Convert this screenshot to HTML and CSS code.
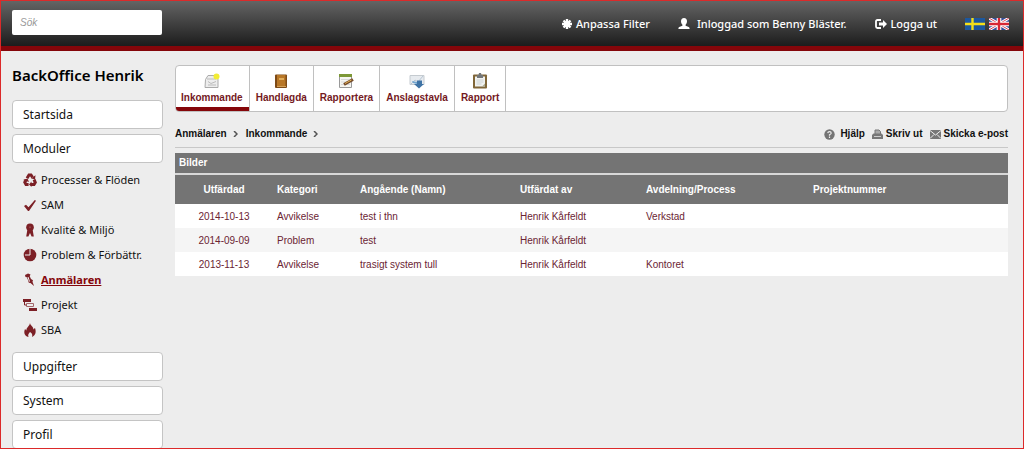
FILE: index.html
```html
<!DOCTYPE html>
<html lang="sv">
<head>
<meta charset="utf-8">
<title>BackOffice Henrik</title>
<link rel="stylesheet" href="styles.css">
</head>
<body>
<header class="topbar">
  <input class="search" type="search" placeholder="Sök" aria-label="Sök">
  <nav class="usernav">
    <a href="#"><svg width="10" height="10" viewBox="0 0 10 10" stroke="#fff" stroke-width="2.4"><path d="M5 0v10M0 5h10M1.5 1.5l7 7M8.5 1.5l-7 7"/></svg>Anpassa Filter</a>
    <a class="user" href="#"><svg width="12" height="12" viewBox="0 0 12 12" fill="#fff"><path d="M6 0c2 0 3 1.300 3 3.200 0 1.600-.6 2.700-1.400 3.500v1.100c1.500.6 4 1 4 2.600V11H.4v-.6c0-1.600 2.500-2 4-2.600V6.700C3.600 5.900 3 4.800 3 3.200 3 1.300 4 0 6 0z"/></svg>Inloggad som Benny Bläster.</a>
    <a class="logout" href="#"><svg width="12" height="10" viewBox="0 0 12 10"><path d="M6 1H2.500Q1 1 1 2.500v5Q1 9 2.500 9H6" fill="none" stroke="#fff" stroke-width="1.800"/><path d="M4 3.500h4V1l4 4-4 4V6.500H4z" fill="#fff"/></svg>Logga ut</a>
    <span class="flags">
      <a href="#" aria-label="Svenska"><svg width="20" height="12" viewBox="0 0 20 12"><path fill="#1c579e" d="M0 0h20v12H0z"/><path stroke="#f5df18" stroke-width="2.400" d="M7.500 0v12M0 6h20"/></svg></a>
      <a href="#" aria-label="English"><svg width="20" height="12" viewBox="0 0 20 12"><path fill="#344d9a" d="M0 0h20v12H0z"/><path stroke="#fff" stroke-width="2.800" d="M0 0l20 12M20 0L0 12"/><path stroke="#d64456" d="M0 0l20 12M20 0L0 12"/><path stroke="#fff" stroke-width="4.600" d="M10 0v12M0 6h20"/><path stroke="#d82635" stroke-width="2.400" d="M10 0v12M0 6h20"/></svg></a>
    </span>
  </nav>
</header>
<div class="page">
  <aside class="sidebar">
    <h1>BackOffice Henrik</h1>
    <nav class="menu">
      <a class="box" href="#">Startsida</a>
      <a class="box" href="#">Moduler</a>
      <ul class="modules">
        <li><a href="#"><svg viewBox="0 0 14 14"><g fill="none" stroke="#7c2026" stroke-width="3"><path d="M4 5.200L6 2h2l1.600 2.300"/><path d="M11 6.500l1.300 2.800-1.300 2.200H8"/><path d="M5.600 11.500H3L1.800 9.300l1.400-2.500"/></g><path fill="#7c2026" d="M8 5.500l4 .8.500-4zM8.500 8.500v5.500L6 11.500zM0 7l4.500-1.500L6 9z"/></svg>Processer &amp; Flöden</a></li>
        <li><a href="#"><svg viewBox="0 0 14 14"><path fill="#7c2026" d="M1 8l2-1.300 2.500 2.600L11.800 2l1.200.7L6 13H5z"/></svg>SAM</a></li>
        <li><a href="#"><svg viewBox="0 0 14 14"><circle cx="7" cy="4.200" r="3.800" fill="#7c2026"/><path fill="#7c2026" d="M4.500 6h5l1.300 7.500H8.600L7 10l-1.600 3.500H3.200z"/><circle cx="7" cy="4.200" r="1" fill="#96454a"/></svg>Kvalité &amp; Miljö</a></li>
        <li><a href="#"><svg viewBox="0 0 14 14"><circle cx="7" cy="7" r="6.300" fill="#7c2026"/><path d="M7 0v7H2" fill="none" stroke="#eee"/></svg>Problem &amp; Förbättr.</a></li>
        <li><a class="current" href="#"><svg viewBox="0 0 14 14"><path fill="#7c2026" d="M2 2l3-1.500 2.500 1-.8 1.800L8 6l2 1.200-.5 1.600L11 13l-3.500-3-1.700-.3L5 7 3.800 4.300 2.500 4z"/><path stroke="#eee" d="M5 4l1.500 4.500"/></svg>Anmälaren</a></li>
        <li><a href="#"><svg viewBox="0 0 14 14"><path fill="#7c2026" d="M0 1h8v3H0zM6 10h8v3H6z"/><path fill="none" stroke="#a4686c" d="M3.500 5.500h7v3h-7z"/><path fill="none" stroke="#7c2026" d="M1.500 4v3h2"/></svg>Projekt</a></li>
        <li><a href="#"><svg viewBox="0 0 14 14"><path fill="#7c2026" d="M7 0c.2 3 4 3.600 3.200 6.500L12 5c1.500 4 .5 7.500-3 9 .8-2.300 0-3.800-2-5-1.500 1.500-2.300 3-1.500 5C1 12.800.7 9 2 6l1.500 1.500C3 4.500 6.500 3.500 7 0z"/></svg>SBA</a></li>
      </ul>
      <a class="box" href="#">Uppgifter</a>
      <a class="box" href="#">System</a>
      <a class="box" href="#">Profil</a>
    </nav>
  </aside>
  <main class="content">
    <nav class="tabs">
      <a class="active" href="#"><svg viewBox="0 0 16 16"><path d="M1.500 6.500L4 2.500h7l3 4v8h-13z" fill="#ededed" stroke="#aaa"/><path d="M3 6h9M4 8.500l3 2 5-2M4 12h8" fill="none" stroke="#bbb"/><circle cx="12.500" cy="3.500" r="3" fill="#f2ec35"/></svg>Inkommande</a>
      <a href="#"><svg viewBox="0 0 16 16"><rect x="2" y="1.500" width="12" height="13.500" rx="1" fill="#7d4a16"/><path fill="#b87727" d="M4 2h8.500v12H4z"/><path fill="#e0ad5b" d="M6 5h5v2H6z"/><path stroke="#d4a25a" d="M4 13.500h9"/></svg>Handlagda</a>
      <a href="#"><svg viewBox="0 0 16 16"><path d="M1.500 2.500h12v12h-12z" fill="#f6f6f1" stroke="#999"/><path fill="#7d9837" d="M1 1h13v3H1z"/><path stroke="#d8d8d8" d="M3 6.500h9M3 9h6M3 11.500h9"/><path stroke="#744a29" stroke-width="3" d="M6 11.500l9-5"/><path stroke="#e3b354" d="M7 10.500l6.500-3.500"/></svg>Rapportera</a>
      <a href="#"><svg viewBox="0 0 16 16"><path d="M1 2.500h14v9H1z" fill="#e7ebef" stroke="#c5cbd0"/><path d="M2 11l4-4 3 2 5-6" fill="none" stroke="#b7c5d3"/><path fill="#3f73a5" d="M8 7.500h5V11h2l-5 4.500L5 11h3z"/><path fill="#72a5cf" d="M3 8l5 1v2L4 10z"/></svg>Anslagstavla</a>
      <a href="#"><svg viewBox="0 0 16 16"><rect x="1" y="1.500" width="14" height="14" rx="1" fill="#806638"/><path fill="#f1f2ef" d="M3 3.500h10v10H3z"/><path fill="#73777a" d="M5 2h1.500L7 0h2l.5 2H11v3H5z"/><path stroke="#ccd1d2" d="M4.500 7h7M4.500 9h7M4.500 11h5"/><path fill="#aaa98f" d="M10 13.500l3-3v3z"/></svg>Rapport</a>
    </nav>
    <div class="toolbar">
      <nav class="crumbs">
        <a href="#">Anmälaren<svg width="5" height="6" viewBox="0 0 5 6"><path d="M1 0l3 3-3 3" fill="none" stroke="#555" stroke-width="1.500"/></svg></a>
        <a href="#">Inkommande<svg width="5" height="6" viewBox="0 0 5 6"><path d="M1 0l3 3-3 3" fill="none" stroke="#555" stroke-width="1.500"/></svg></a>
      </nav>
      <div class="actions">
        <a class="help" href="#"><svg width="11" height="11" viewBox="0 0 11 11"><circle cx="5.500" cy="5.500" r="5.200" fill="#747474"/><path d="M3.700 4.200Q4 2.700 5.600 2.700T7.200 4.300Q7.100 5.100 5.500 5.700v1M5.500 7.500V9" fill="none" stroke="#eee" stroke-width="1.200"/></svg>Hjälp</a>
        <a href="#"><svg width="11" height="11" viewBox="0 0 11 11"><path d="M3 5V1h4l1.500 1.500V5" fill="#aaa" stroke="#777"/><path fill="#777" d="M1.500 4.500h8L11 6v4H0V6z"/><path stroke="#ccc" d="M2 7.500h7"/></svg>Skriv ut</a>
        <a href="#"><svg width="11" height="11" viewBox="0 0 11 11"><path fill="#777" d="M0 1h11v9H0z"/><path d="M0 1.500l5.500 4.500L11 1.500M0 9.500l4-4M11 9.500l-4-4" fill="none" stroke="#eee"/></svg>Skicka e-post</a>
      </div>
    </div>
    <table class="grid">
      <caption>Bilder</caption>
      <colgroup><col class="c-date"><col class="c-cat"><col class="c-name"><col class="c-by"><col class="c-dept"><col></colgroup>
      <thead><tr><th>Utfärdad</th><th>Kategori</th><th>Angående (Namn)</th><th>Utfärdat av</th><th>Avdelning/Process</th><th>Projektnummer</th></tr></thead>
      <tbody>
        <tr><td>2014-10-13</td><td>Avvikelse</td><td>test i thn</td><td>Henrik Kårfeldt</td><td>Verkstad</td><td></td></tr>
        <tr><td>2014-09-09</td><td>Problem</td><td>test</td><td>Henrik Kårfeldt</td><td></td><td></td></tr>
        <tr><td>2013-11-13</td><td>Avvikelse</td><td>trasigt system tull</td><td>Henrik Kårfeldt</td><td>Kontoret</td><td></td></tr>
      </tbody>
    </table>
  </main>
</div>
</body>
</html>
```
FILE: styles.css
```css
* { box-sizing: border-box; }
html { height: 100%; overflow: hidden; }
body {
  height: 100%;
  margin: 0;
  overflow: hidden;
  background: #ededed;
  color: #111;
  font: 10px/14px "Liberation Sans", Arial, sans-serif;
}
body::after {
  content: "";
  position: fixed;
  inset: 0;
  border: 1px solid #dc2a2a;
  pointer-events: none;
}
a { color: inherit; text-decoration: none; }
svg { flex: none; display: block; }

.topbar {
  display: flex;
  align-items: flex-start;
  justify-content: space-between;
  height: 51px;
  padding: 10px 15px 0 12px;
  border-bottom: 5px solid #85060a;
  background: linear-gradient(#666, #1c1c1c);
}
.search {
  width: 150px;
  height: 25px;
  padding: 0 8px;
  border: 0;
  border-radius: 2px;
  background: #fff;
  font: italic 10px "Liberation Sans", Arial, sans-serif;
}
.search::placeholder { color: #999; }
.usernav {
  display: flex;
  align-items: center;
  height: 28px;
  color: #fff;
  font: 500 11px/16px "Noto Sans", sans-serif;
}
.usernav a { display: flex; align-items: center; gap: 4px; }
.usernav .user { gap: 7px; margin-left: 28px; }
.usernav .logout { margin-left: 28px; }
.flags { display: flex; gap: 4px; margin-left: 28px; }

.page { display: flex; gap: 12px; padding: 14px 16px 0 12px; }
.sidebar { flex: none; width: 151px; }
.sidebar h1 {
  margin: 0 0 15px;
  font: 600 15px/20px "Noto Sans", sans-serif;
  color: #000;
}
.menu { font: 12px/16px "Noto Sans", sans-serif; }
.box {
  display: block;
  margin-bottom: 5px;
  padding: 6px 10px 5px;
  border: 1px solid #c4c4c4;
  border-radius: 4px;
  background: #fff;
}
.modules { margin: -1px 0 0; padding: 0 0 10px 11px; list-style: none; font-size: 11px; }
.modules a { display: flex; align-items: center; gap: 4px; height: 25px; }
.modules svg { width: 14px; height: 14px; }
.modules .current { color: #85060a; font-weight: 700; text-decoration: underline; }

.content { flex: 1; min-width: 0; }
.tabs {
  display: flex;
  height: 47px;
  border: 1px solid #c0c0c0;
  border-radius: 4px;
  background: #fff;
  overflow: hidden;
}
.tabs a {
  display: flex;
  flex-direction: column;
  align-items: center;
  gap: 2px;
  padding: 7px 6px 0;
  border-right: 1px solid #c0c0c0;
  color: #74191e;
  font-weight: 700;
}
.tabs .active { padding-left: 5px; box-shadow: inset 0 -4px #85060a; }
.tabs svg { width: 16px; height: 16px; }

.toolbar {
  display: flex;
  align-items: center;
  justify-content: space-between;
  height: 36px;
  padding-top: 9px;
  border-bottom: 1px solid #c8c8c8;
  margin-bottom: 5px;
  font-weight: 700;
}
.crumbs, .actions { display: flex; align-items: center; }
.crumbs { gap: 8px; }
.crumbs a { display: flex; align-items: center; gap: 6px; }
.actions { gap: 7px; }
.actions a { display: flex; align-items: center; gap: 3px; }
.actions .help { gap: 5px; }

.grid { width: 100%; border-collapse: collapse; table-layout: fixed; background: #fff; }
.grid caption {
  padding: 3px 4px;
  border-bottom: 2px solid #d8d8d8;
  background: #747474;
  color: #fff;
  font-weight: 700;
  text-align: left;
}
.c-date { width: 98px; }
.c-cat { width: 83px; }
.c-name { width: 160px; }
.c-by { width: 126px; }
.c-dept { width: 167px; }
.grid th, .grid td { padding: 6px 4px 4px; text-align: left; }
.grid th { padding: 8px 4px 7px; background: #747474; color: #fff; }
.grid th:first-child, .grid td:first-child { text-align: center; }
.grid td { height: 24px; color: #6b2433; }
.grid tbody tr:nth-child(even) { background: #f5f5f5; }
```
